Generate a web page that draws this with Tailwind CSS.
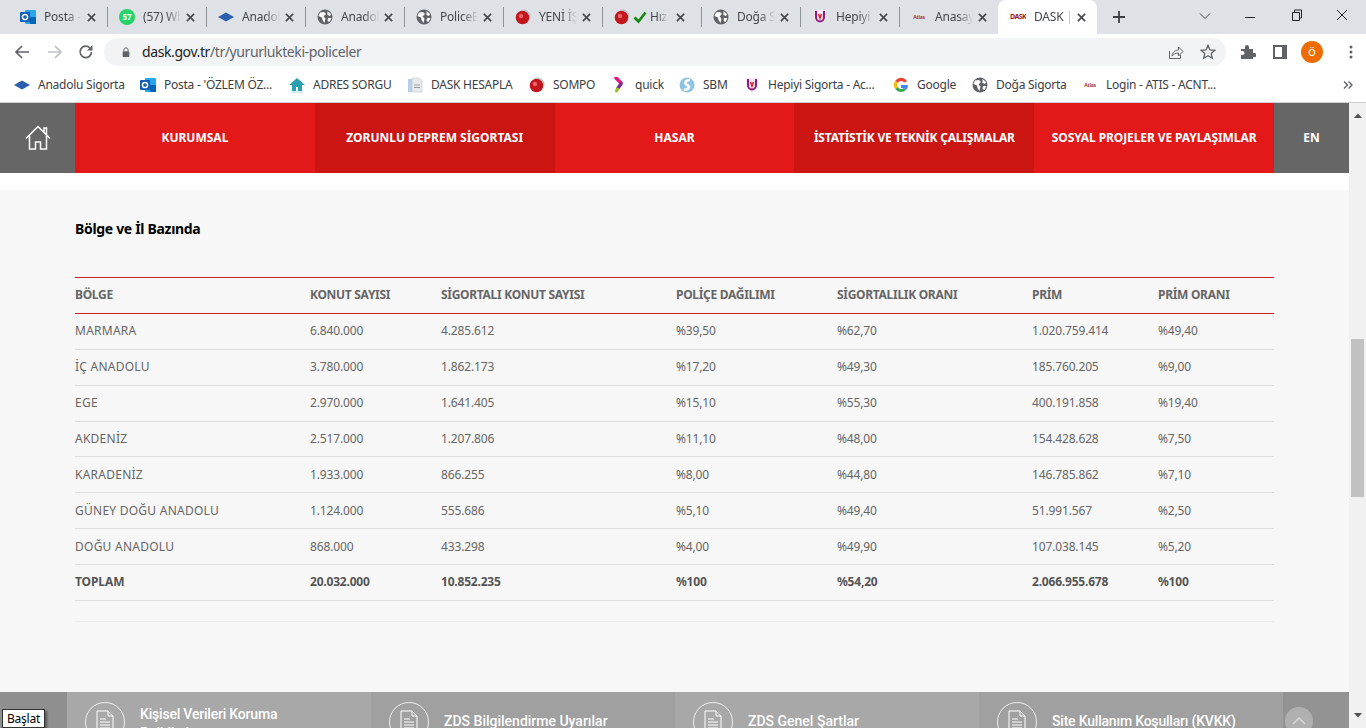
<!DOCTYPE html>
<html lang="tr">
<head>
  <meta charset="UTF-8" />
  <meta name="viewport" content="width=device-width, initial-scale=1.0" />
  <title>DASK</title>
  <script src="https://cdn.jsdelivr.net/npm/@tailwindcss/browser@4"></script>
</head>
<body class="w-[1366px] h-[728px] overflow-hidden flex flex-col bg-white font-['Noto_Sans',sans-serif]">
  <!-- shared favicons -->
  <svg class="hidden">
    <symbol id="outlook" viewBox="0 0 16 16"><rect x="5" y="1" width="11" height="14" rx="1" fill="#28a8ea"/><rect x="10" y="8" width="6" height="7" fill="#0364b8"/><rect x="0" y="3" width="10" height="10" rx="1" fill="#0f5fb8"/><circle cx="5" cy="8" r="2.6" fill="none" stroke="#fff" stroke-width="1.5"/></symbol>
    <symbol id="diamond" viewBox="0 0 16 16"><path d="M0 8 8 3.5 16 8 8 12.5Z" fill="#2b5fad"/></symbol>
    <symbol id="globe" viewBox="0 0 16 16"><circle cx="8" cy="8" r="7.5" fill="#5f6368"/><path d="M3 3.5 7 3 9 5 6.500 7.500 8.500 9.500 7.500 14 5.500 11 5 8.500 1.500 7ZM10.500 2 14 5 13 7 10.500 6ZM11 9 14.500 9 12.500 13 10.500 12Z" fill="#fff"/></symbol>
    <symbol id="sphere" viewBox="0 0 16 16"><circle cx="7.500" cy="8.500" r="6.800" fill="#c3161c"/><circle cx="6" cy="7" r="2.200" fill="#e8666a"/><path d="M6 1.500A7 7 0 0 1 15 8" fill="none" stroke="#b9bcc0" stroke-width="1.200"/></symbol>
    <symbol id="shield" viewBox="0 0 16 16"><path d="M2 1h12v9l-6 5-6-5Z" fill="#f3e6ef"/><path d="M4 2v6c0 3 2 4.500 4 4.500s4-1.500 4-4.500V2" fill="none" stroke="#8d1b7d" stroke-width="2"/><path d="M6.500 5 8 9l1.500-4" fill="none" stroke="#d3232a" stroke-width="1.500"/></symbol>
    <symbol id="xicon" viewBox="0 0 10 10"><path d="M1 1 9 9M9 1 1 9" stroke="#45474a" stroke-width="1.800" fill="none"/></symbol>
    <symbol id="doc" viewBox="0 0 18 24"><path d="M1 1h11l5 5v17H1Z" fill="none" stroke="#fff" stroke-width="1"/><path d="M12 1v5h5M4 9h6M4 12h10M4 15h10M4 18h10" fill="none" stroke="#fff" stroke-width="1"/></symbol>
  </svg>

  <!-- tab strip -->
  <div class="h-[34px] shrink-0 bg-[#dee1e6] flex pl-2 text-xs tracking-[-0.2px] text-[#45474a]">
    <div class="w-[99px] h-[34px] flex items-center pl-3 relative"><svg class="size-4 shrink-0"><use href="#outlook"/></svg><span class="ml-2 w-[38px] overflow-hidden whitespace-nowrap [mask-image:linear-gradient(90deg,#000_60%,transparent)]">Posta - Özlem</span><svg class="ml-[5px] size-[9px]"><use href="#xicon"/></svg><i class="absolute right-[-1px] top-[7px] h-5 w-px bg-[#8e9196]"></i></div>
    <div class="w-[99px] h-[34px] flex items-center pl-3 relative"><span class="size-4 shrink-0 rounded-full bg-[#25d366] text-white text-[8px] font-bold leading-4 text-center">57</span><span class="ml-2 w-[38px] overflow-hidden whitespace-nowrap [mask-image:linear-gradient(90deg,#000_60%,transparent)]">(57) WhatsApp</span><svg class="ml-[5px] size-[9px]"><use href="#xicon"/></svg><i class="absolute right-[-1px] top-[7px] h-5 w-px bg-[#8e9196]"></i></div>
    <div class="w-[99px] h-[34px] flex items-center pl-3 relative"><svg class="size-4 shrink-0"><use href="#diamond"/></svg><span class="ml-2 w-[38px] overflow-hidden whitespace-nowrap [mask-image:linear-gradient(90deg,#000_60%,transparent)]">Anadolu Sigorta</span><svg class="ml-[5px] size-[9px]"><use href="#xicon"/></svg><i class="absolute right-[-1px] top-[7px] h-5 w-px bg-[#8e9196]"></i></div>
    <div class="w-[99px] h-[34px] flex items-center pl-3 relative"><svg class="size-4 shrink-0"><use href="#globe"/></svg><span class="ml-2 w-[38px] overflow-hidden whitespace-nowrap [mask-image:linear-gradient(90deg,#000_60%,transparent)]">Anadolu Sigorta</span><svg class="ml-[5px] size-[9px]"><use href="#xicon"/></svg><i class="absolute right-[-1px] top-[7px] h-5 w-px bg-[#8e9196]"></i></div>
    <div class="w-[99px] h-[34px] flex items-center pl-3 relative"><svg class="size-4 shrink-0"><use href="#globe"/></svg><span class="ml-2 w-[38px] overflow-hidden whitespace-nowrap [mask-image:linear-gradient(90deg,#000_60%,transparent)]">PoliceBul</span><svg class="ml-[5px] size-[9px]"><use href="#xicon"/></svg><i class="absolute right-[-1px] top-[7px] h-5 w-px bg-[#8e9196]"></i></div>
    <div class="w-[99px] h-[34px] flex items-center pl-3 relative"><svg class="size-4 shrink-0"><use href="#sphere"/></svg><span class="ml-2 w-[38px] overflow-hidden whitespace-nowrap [mask-image:linear-gradient(90deg,#000_60%,transparent)]">YENİ İŞ EMRİ</span><svg class="ml-[5px] size-[9px]"><use href="#xicon"/></svg><i class="absolute right-[-1px] top-[7px] h-5 w-px bg-[#8e9196]"></i></div>
    <div class="w-[99px] h-[34px] flex items-center pl-3 relative"><svg class="size-4 shrink-0"><use href="#sphere"/></svg><svg class="ml-[3px] size-[14px] shrink-0" viewBox="0 0 14 14"><path d="M1.500 7.500 5.500 11.500 12.500 2.500" fill="none" stroke="#128a12" stroke-width="2.600"/></svg><span class="ml-[3px] w-[18px] overflow-hidden whitespace-nowrap [mask-image:linear-gradient(90deg,#000_40%,transparent)]">Hızlı</span><svg class="ml-[8px] size-[9px]"><use href="#xicon"/></svg><i class="absolute right-[-1px] top-[7px] h-5 w-px bg-[#8e9196]"></i></div>
    <div class="w-[99px] h-[34px] flex items-center pl-3 relative"><svg class="size-4 shrink-0"><use href="#globe"/></svg><span class="ml-2 w-[38px] overflow-hidden whitespace-nowrap [mask-image:linear-gradient(90deg,#000_60%,transparent)]">Doğa Sigorta</span><svg class="ml-[5px] size-[9px]"><use href="#xicon"/></svg><i class="absolute right-[-1px] top-[7px] h-5 w-px bg-[#8e9196]"></i></div>
    <div class="w-[99px] h-[34px] flex items-center pl-3 relative"><svg class="size-4 shrink-0"><use href="#shield"/></svg><span class="ml-2 w-[38px] overflow-hidden whitespace-nowrap [mask-image:linear-gradient(90deg,#000_60%,transparent)]">Hepiyi Sigorta</span><svg class="ml-[5px] size-[9px]"><use href="#xicon"/></svg><i class="absolute right-[-1px] top-[7px] h-5 w-px bg-[#8e9196]"></i></div>
    <div class="w-[99px] h-[34px] flex items-center pl-3"><span class="size-4 shrink-0 text-[5px] font-bold leading-4 text-[#a5383c] text-center overflow-hidden">Atlas</span><span class="ml-2 w-[38px] overflow-hidden whitespace-nowrap [mask-image:linear-gradient(90deg,#000_60%,transparent)]">Anasayfa</span><svg class="ml-[5px] size-[9px]"><use href="#xicon"/></svg></div>
    <div class="w-[99px] h-[34px] flex items-center pl-3 bg-white rounded-t-lg"><span class="size-4 shrink-0 text-[7px] font-bold leading-4 text-[#a3161c] text-center overflow-hidden tracking-[-0.6px]">DASK</span><span class="ml-2 w-[38px] overflow-hidden whitespace-nowrap [mask-image:linear-gradient(90deg,#000_80%,transparent)]">DASK | Doğal</span><svg class="ml-[5px] size-[9px]"><use href="#xicon"/></svg></div>
    <svg class="ml-[15px] mt-[10px] size-[14px]" viewBox="0 0 14 14"><path d="M7 1v12M1 7h12" stroke="#3c4043" stroke-width="1.800"/></svg>
    <svg class="ml-[73px] mt-[10px] size-[12px]" viewBox="0 0 12 12"><path d="M1 3.500 6 8.500 11 3.500" fill="none" stroke="#3c4043"/></svg>
    <svg class="ml-[33px] mt-[11px] size-[12px]" viewBox="0 0 12 12"><path d="M1 6.500h10" stroke="#202124" stroke-width="1"/></svg>
    <svg class="ml-[35px] mt-[9px] size-[12px]" viewBox="0 0 12 12"><path d="M1.500 3.500h7v8h-7ZM3.500 3.500V1h7v8H8.500" fill="none" stroke="#202124"/></svg>
    <svg class="ml-[33px] mt-[9px] size-[12px]" viewBox="0 0 12 12"><path d="M1 1 11 11M11 1 1 11" stroke="#202124"/></svg>
  </div>

  <!-- toolbar -->
  <div class="h-[35px] shrink-0 bg-white flex items-center pl-[14px]">
    <svg class="size-4" viewBox="0 0 16 16"><path d="M15 8H2M8 2 2 8l6 6" fill="none" stroke="#5f6368" stroke-width="1.700"/></svg>
    <svg class="ml-[17px] size-4" viewBox="0 0 16 16"><path d="M1 8h13M8 2l6 6-6 6" fill="none" stroke="#bdc1c6" stroke-width="1.700"/></svg>
    <svg class="ml-[15px] size-4" viewBox="0 0 16 16"><path d="M13.500 8A5.700 5.700 0 1 1 11.800 3.800" fill="none" stroke="#5f6368" stroke-width="1.700"/><path d="M14.500 1v5.500H9Z" fill="#5f6368"/></svg>
    <div class="ml-[10px] w-[1122px] h-7 rounded-full bg-[#f1f3f4] flex items-center pl-[17px] pr-[10px]">
      <svg class="size-[10px]" viewBox="0 0 10 12"><path d="M2.500 5V3.500a2.500 2.500 0 0 1 5 0V5" fill="none" stroke="#5f6368" stroke-width="1.200"/><rect x="1" y="5" width="8" height="7" rx="1" fill="#5f6368"/></svg>
      <span class="ml-[11px] text-[14px] text-[#202124] tracking-[-0.4px]">dask.gov.tr<span class="text-[#5f6368]">/tr/yururlukteki-policeler</span></span>
      <svg class="ml-auto size-4" viewBox="0 0 16 16"><path d="M1.500 7v7.500h11V11" fill="none" stroke="#5f6368"/><path d="M4 12c.5-4 3.500-6 6.500-6V3L15 7.500 10.500 12V9C8 9 5.500 10 4 12Z" fill="none" stroke="#5f6368"/></svg>
      <svg class="ml-4 size-4" viewBox="0 0 16 16"><path d="M8 1.500 10 6l4.800.4-3.600 3.200 1.100 4.700L8 11.800l-4.300 2.500 1.100-4.700L1.200 6.400 6 6Z" fill="none" stroke="#5f6368" stroke-width="1.300"/></svg>
    </div>
    <svg class="ml-[14px] size-4" viewBox="0 0 16 16"><path d="M1 5h4V3a2 2 0 0 1 4 0v2h4v4h1.500a2 2 0 0 1 0 4H13v2H1v-4h1.500a2 2 0 0 0 0-4H1Z" fill="#5f6368"/></svg>
    <svg class="ml-4 size-4" viewBox="0 0 16 16"><path d="M2 2h12v12H2Z" fill="none" stroke="#5f6368" stroke-width="2"/><path d="M10 2h4v12h-4Z" fill="#5f6368"/></svg>
    <span class="ml-[13px] size-[22px] rounded-full bg-[#ef6c00] text-white text-[13px] leading-[21px] text-center">ö</span>
    <svg class="ml-[20px] size-4" viewBox="0 0 16 16"><circle cx="8" cy="3" r="1.500" fill="#5f6368"/><circle cx="8" cy="8" r="1.500" fill="#5f6368"/><circle cx="8" cy="13" r="1.500" fill="#5f6368"/></svg>
  </div>

  <!-- bookmarks -->
  <div class="h-[34px] pb-px shrink-0 bg-white border-b border-[#d0d0d0] flex items-center gap-4 pl-[14px] text-xs tracking-[-0.25px] text-[#3c4043] [&>div]:flex [&>div]:items-center [&>div]:gap-2 [&>div]:whitespace-nowrap">
    <div class="w-[110px]"><svg class="size-4 shrink-0"><use href="#diamond"/></svg>Anadolu Sigorta</div>
    <div class="w-[133px]"><svg class="size-4 shrink-0"><use href="#outlook"/></svg>Posta - 'ÖZLEM ÖZ...</div>
    <div class="w-[102px]"><svg class="size-4 shrink-0" viewBox="0 0 16 16"><path d="M8 1 16 8H13V14H9V10H7V14H3V8H0Z" fill="#2a9fb0"/><path d="M2 15h12" stroke="#a8d8de"/></svg>ADRES SORGU</div>
    <div class="w-[106px]"><svg class="size-4 shrink-0" viewBox="0 0 16 16"><path d="M1 2h5v13H1Z" fill="#b9cfe8"/><path d="M5 1h7l3 3v11H5Z" fill="#e8ebee" stroke="#b8bcc2" stroke-width=".5"/><path d="M7 8h6M7 10.500h6" stroke="#9aa0a6"/></svg>DASK HESAPLA</div>
    <div class="w-[66px]"><svg class="size-4 shrink-0"><use href="#sphere"/></svg>SOMPO</div>
    <div class="w-[52px]"><svg class="size-4 shrink-0" viewBox="0 0 16 16"><path d="M5 1 10 6" stroke="#e6177f" stroke-width="3.500" stroke-linecap="round"/><path d="M10 7 7 11" stroke="#7b2d8e" stroke-width="3.500" stroke-linecap="round"/><path d="M6.500 12 5.500 14" stroke="#9ac31c" stroke-width="3" stroke-linecap="round"/></svg>quick</div>
    <div class="w-[49px]"><svg class="size-4 shrink-0" viewBox="0 0 16 16"><circle cx="8" cy="8" r="7.500" fill="#8ec4e4"/><path d="M11 3C6 3 5 7 8 8s3 4-3 5" fill="none" stroke="#fff" stroke-width="2.500"/></svg>SBM</div>
    <div class="w-[133px]"><svg class="size-4 shrink-0"><use href="#shield"/></svg>Hepiyi Sigorta - Ac...</div>
    <div class="w-[63px]"><svg class="size-4 shrink-0" viewBox="0 0 16 16"><path d="M14 4.200A7 7 0 0 0 2.400 3.700L4.800 6A4 4 0 0 1 11.500 5.500Z" fill="#ea4335"/><path d="M2.400 3.700A7 7 0 0 0 2.400 12.300L4.800 10A4 4 0 0 1 4.800 6Z" fill="#fbbc05"/><path d="M2.400 12.300A7 7 0 0 0 13 13L10.800 11A4 4 0 0 1 4.800 10Z" fill="#34a853"/><path d="M15 8H8v3h3.800A4 4 0 0 1 10.800 11L13 13A7 7 0 0 0 15 8Z" fill="#4285f4"/></svg>Google</div>
    <div class="w-[94px]"><svg class="size-4 shrink-0"><use href="#globe"/></svg>Doğa Sigorta</div>
    <div class="w-[138px]"><span class="size-4 shrink-0 text-[5px] font-bold leading-4 text-[#a5383c] text-center overflow-hidden">Atlas</span>Login - ATIS - ACNT...</div>
    <svg class="ml-[107px] size-[10px]" viewBox="0 0 10 10"><path d="M1 1.500 4.500 5 1 8.500M5.500 1.500 9 5 5.500 8.500" fill="none" stroke="#5f6368" stroke-width="1.400"/></svg>
  </div>

  <!-- page with scrollbar -->
  <div class="flex-1 flex min-h-0">
    <div class="w-[1349px] flex flex-col relative min-h-0">
      <nav class="h-[70px] shrink-0 flex text-white text-[12px] font-bold [&>a]:w-[239.800px] [&>a]:flex [&>a]:items-center [&>a]:justify-center">
        <div class="w-[75px] bg-[#666] flex items-center justify-center">
          <svg class="size-[26px]" viewBox="0 0 26 26"><path d="M1 13.500 13 1.500 25 13.500M4.500 11v13h6v-7h5v7h6V11M19 7V3h2.500v6.500" fill="none" stroke="#fff" stroke-width="1.500"/></svg>
        </div>
        <a class="bg-[#e31818]">KURUMSAL</a>
        <a class="bg-[#cb1513]">ZORUNLU DEPREM SİGORTASI</a>
        <a class="bg-[#e31818]">HASAR</a>
        <a class="bg-[#cb1513] tracking-[-0.2px]">İSTATİSTİK VE TEKNİK ÇALIŞMALAR</a>
        <a class="bg-[#e31818] tracking-[-0.1px]">SOSYAL PROJELER VE PAYLAŞIMLAR</a>
        <div class="flex-1 bg-[#666] flex items-center justify-center">EN</div>
      </nav>
      <div class="h-[17px] shrink-0 bg-white"></div>
      <main class="flex-1 bg-[#f7f7f7] px-[75px] text-xs text-[#666] min-h-0">
        <h2 class="mt-[29px] text-[14px] leading-[20px] font-bold tracking-[-0.32px] text-black">Bölge ve İl Bazında</h2>
        <table class="mt-[38px] w-[1199px] table-fixed border-collapse text-left tracking-[-0.15px] [&_td]:h-[35.860px] [&_th]:h-[36px] [&_td]:p-0 [&_th]:p-0 [&_th]:pb-[2px] [&_th]:tracking-[-0.3px] [&_td:first-child]:tracking-[0.25px] [&_tbody_tr]:border-b [&_tbody_tr]:border-[#ddd]">
          <colgroup><col class="w-[235px]"/><col class="w-[131px]"/><col class="w-[235px]"/><col class="w-[161px]"/><col class="w-[195px]"/><col class="w-[126px]"/><col/></colgroup>
          <thead class="font-bold border-y border-[#c62026]">
            <tr><th>BÖLGE</th><th>KONUT SAYISI</th><th>SİGORTALI KONUT SAYISI</th><th>POLİÇE DAĞILIMI</th><th>SİGORTALILIK ORANI</th><th>PRİM</th><th>PRİM ORANI</th></tr>
          </thead>
          <tbody>
            <tr><td>MARMARA</td><td>6.840.000</td><td>4.285.612</td><td>%39,50</td><td>%62,70</td><td>1.020.759.414</td><td>%49,40</td></tr>
            <tr><td>İÇ ANADOLU</td><td>3.780.000</td><td>1.862.173</td><td>%17,20</td><td>%49,30</td><td>185.760.205</td><td>%9,00</td></tr>
            <tr><td>EGE</td><td>2.970.000</td><td>1.641.405</td><td>%15,10</td><td>%55,30</td><td>400.191.858</td><td>%19,40</td></tr>
            <tr><td>AKDENİZ</td><td>2.517.000</td><td>1.207.806</td><td>%11,10</td><td>%48,00</td><td>154.428.628</td><td>%7,50</td></tr>
            <tr><td>KARADENİZ</td><td>1.933.000</td><td>866.255</td><td>%8,00</td><td>%44,80</td><td>146.785.862</td><td>%7,10</td></tr>
            <tr><td>GÜNEY DOĞU ANADOLU</td><td>1.124.000</td><td>555.686</td><td>%5,10</td><td>%49,40</td><td>51.991.567</td><td>%2,50</td></tr>
            <tr><td>DOĞU ANADOLU</td><td>868.000</td><td>433.298</td><td>%4,00</td><td>%49,90</td><td>107.038.145</td><td>%5,20</td></tr>
            <tr class="font-bold text-[#555] tracking-[-0.2px]"><td class="!tracking-[-0.1px]">TOPLAM</td><td>20.032.000</td><td>10.852.235</td><td>%100</td><td>%54,20</td><td>2.066.955.678</td><td>%100</td></tr>
          </tbody>
        </table>
        <div class="mt-5 w-[1199px] border-t border-[#eee]"></div>
      </main>
      <!-- fixed footer bar, cut off by the window -->
      <footer class="h-[36px] shrink-0 flex overflow-hidden bg-[#8f8f8f] text-white text-[14px] leading-[19px] font-medium font-['Roboto',sans-serif]">
        <div class="w-[67px] shrink-0"></div>
        <a class="w-[304px] h-[60px] shrink-0 bg-[#a8a8a8] flex pl-[18px] pt-[10px]"><span class="size-10 shrink-0 rounded-full border border-white/80 flex items-center justify-center"><svg class="size-[18px] h-6"><use href="#doc"/></svg></span><span class="ml-[15px] mt-[3px] tracking-[-0.2px]">Kişisel Verileri Koruma<br/>Politikalarımız</span></a>
        <a class="w-[304px] h-[60px] shrink-0 bg-[#a0a0a0] flex pl-[18px] pt-[10px]"><span class="size-10 shrink-0 rounded-full border border-white/80 flex items-center justify-center"><svg class="size-[18px] h-6"><use href="#doc"/></svg></span><span class="ml-[15px] mt-[10px]">ZDS Bilgilendirme Uyarılar</span></a>
        <a class="w-[304px] h-[60px] shrink-0 bg-[#a8a8a8] flex pl-[18px] pt-[10px]"><span class="size-10 shrink-0 rounded-full border border-white/80 flex items-center justify-center"><svg class="size-[18px] h-6"><use href="#doc"/></svg></span><span class="ml-[15px] mt-[10px]">ZDS Genel Şartlar</span></a>
        <a class="w-[304px] h-[60px] shrink-0 bg-[#a0a0a0] flex pl-[18px] pt-[10px]"><span class="size-10 shrink-0 rounded-full border border-white/80 flex items-center justify-center"><svg class="size-[18px] h-6"><use href="#doc"/></svg></span><span class="ml-[15px] mt-[10px] tracking-[-0.2px]">Site Kullanım Koşulları (KVKK)</span></a>
        <div class="flex-1 bg-[#939393] pl-[2px] pt-[15px]"><span class="size-7 rounded-full bg-[#b0b0b0] flex items-center justify-center"><svg class="size-[14px]" viewBox="0 0 14 14"><path d="M1 10 7 4l6 6" fill="none" stroke="#d8d8d8" stroke-width="1.500"/></svg></span></div>
      </footer>
      <!-- tooltip over the footer -->
      <span class="absolute left-[2px] bottom-0 h-[19px] w-[43px] bg-white border border-[#333] shadow-[2px_2px_2px_rgba(0,0,0,.4)] text-xs tracking-[-0.2px] leading-[17px] text-center text-black">Başlat</span>
    </div>
    <!-- scrollbar -->
    <div class="flex-1 bg-[#f1f1f1] flex flex-col items-center">
      <svg class="mt-[9px] size-2" viewBox="0 0 8 8"><path d="M0 6 4 1.500 8 6Z" fill="#505050"/></svg>
      <div class="mt-[219px] w-[13px] h-[158px] bg-[#c1c1c1]"></div>
      <svg class="mt-auto mb-[9px] size-2" viewBox="0 0 8 8"><path d="M0 2 4 6.500 8 2Z" fill="#505050"/></svg>
    </div>
  </div>
</body>
</html>
